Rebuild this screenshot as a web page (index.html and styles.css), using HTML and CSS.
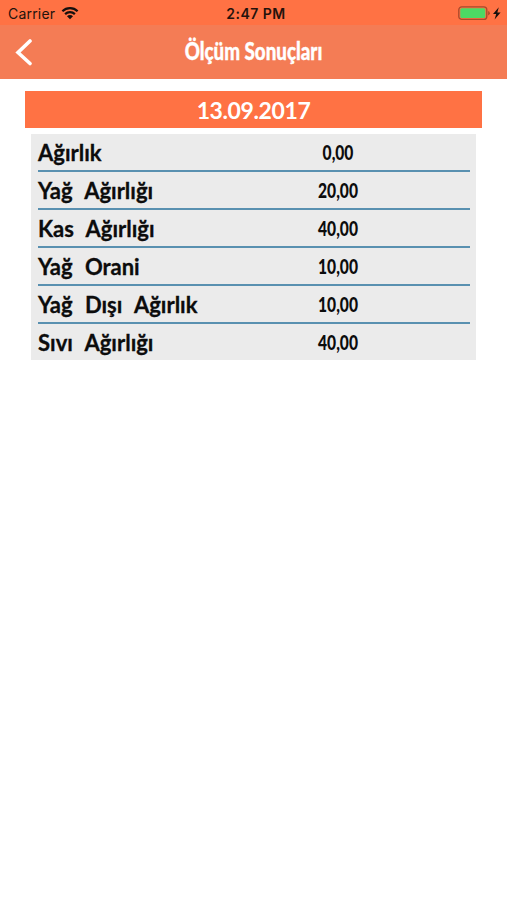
FILE: index.html
```
<!DOCTYPE html>
<html lang="tr">
<head>
  <meta charset="UTF-8">
  <title>Ölçüm Sonuçları</title>
  <link rel="stylesheet" href="styles.css">
</head>

<body>

  <div class="status-bar">
    <div class="carrier">
      <span class="carrier-name">Carrier</span>
      <svg class="wifi" width="18" height="14" viewBox="0 0 18 14">
        <path d="M1.4 5.3a10.8 10.8 0 0 1 15.2 0M4.1 8.1a7 7 0 0 1 9.8 0" fill="none" stroke="#16100e" stroke-width="2.2"/>
        <path d="M9 13.2L6 10.2a4.2 4.2 0 0 1 6 0z" fill="#16100e"/>
      </svg>
    </div>
    <div class="time">2:47 PM</div>
    <div class="battery">
      <svg width="46" height="16" viewBox="0 0 46 16">
        <rect x="0.8" y="1.8" width="28" height="12.6" rx="3" fill="none" stroke="#a84a2b" stroke-width="1.3"/>
        <rect x="2.3" y="3.3" width="25" height="9.6" rx="1.5" fill="#4cd964"/>
        <path d="M30.2 6v4.4q1.6-.6 1.6-2.2t-1.6-2.2z" fill="#a84a2b"/>
        <path d="M40.8 2.2L35 9h3.2l-1.6 5.6L42.6 7.5h-3.3z" fill="#16100e"/>
      </svg>
    </div>
  </div>

  <div class="nav-bar">
    <svg class="back" width="18" height="28" viewBox="0 0 18 28">
      <path d="M15 3L3 14.5l12 11" fill="none" stroke="#fff" stroke-width="3.6" stroke-linecap="round" stroke-linejoin="miter"/>
    </svg>
    <h1>Ölçüm Sonuçları</h1>
  </div>

  <div class="date"><span>13.09.2017</span></div>

  <div class="results">
    <div class="row"><span class="label">Ağırlık</span><span class="value">0,00</span></div>
    <div class="row"><span class="label">Yağ Ağırlığı</span><span class="value">20,00</span></div>
    <div class="row"><span class="label">Kas Ağırlığı</span><span class="value">40,00</span></div>
    <div class="row"><span class="label">Yağ Orani</span><span class="value">10,00</span></div>
    <div class="row"><span class="label">Yağ Dışı Ağırlık</span><span class="value">10,00</span></div>
    <div class="row"><span class="label">Sıvı Ağırlığı</span><span class="value">40,00</span></div>
  </div>

</body>
</html>
```
FILE: styles.css
```
body {
  margin: 0;
  background: #fff;
  font-family: Lato, sans-serif;
  color: #0c0c0c;
}

.status-bar {
  display: grid;
  grid-template-columns: 1fr auto 1fr;
  align-items: center;
  height: 25px;
  padding: 1px 3px 0 8px;
  box-sizing: border-box;
  background: #ff7244;
  font-family: Inter, sans-serif;
  font-size: 14px;
  color: #24120c;
}

.carrier {
  display: flex;
  align-items: center;
  gap: 6px;
}

.carrier-name {
  letter-spacing: 0.2px;
}

.time {
  font-weight: 600;
  letter-spacing: 0.5px;
}

.battery {
  display: flex;
  justify-content: flex-end;
}

.nav-bar {
  display: grid;
  grid-template-columns: 34px 1fr 34px;
  align-items: center;
  height: 54px;
  background: #f47c55;
}

.back {
  margin-left: 15px;
}

h1 {
  margin: 0;
  padding-bottom: 3px;
  font-size: 25px;
  line-height: 51px;
  font-weight: 900;
  color: #fff;
  text-align: center;
  white-space: nowrap;
  transform: scaleX(0.75);
  -webkit-text-stroke: 0.4px #fff;
}

.date {
  height: 37px;
  margin: 12px 25px 0;
  background: #ff7244;
  color: #fff;
  font-size: 23px;
  font-weight: 700;
  letter-spacing: -0.4px;
  line-height: 38px;
  text-align: center;
}

.results {
  margin: 6px 31px 0;
  padding: 0 6px 0 7px;
  background: #ebebeb;
}

.row {
  display: grid;
  grid-template-columns: 234px 132px;
  height: 36px;
  line-height: 38px;
  border-bottom: 2px solid #5990b0;
}

.row:last-child {
  border-bottom: none;
}

.label {
  font-size: 22px;
  font-weight: 700;
  word-spacing: 7px;
  white-space: nowrap;
  -webkit-text-stroke: 0.3px #0c0c0c;
}

/* narrow figures */
.value {
  font-size: 20px;
  font-weight: 900;
  line-height: 36px;
  text-align: center;
  transform: scaleX(0.78);
}
```
